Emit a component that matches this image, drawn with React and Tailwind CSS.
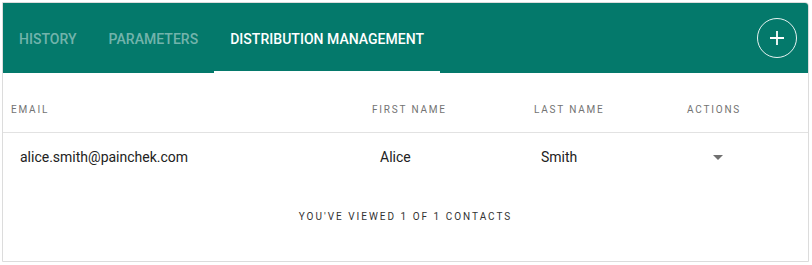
export default function App() {
  const tabs = ['History', 'Parameters', 'Distribution Management']
  const active = 2
  return (
    <div className="w-[812px] h-[265px] bg-white pt-[2px] pl-[2px] pr-[3px] font-['Roboto','Liberation_Sans',sans-serif]">
      <div className="h-[260px] border border-[#dcdcdc] rounded-tr-[4px] overflow-hidden flex flex-col">
        <div className="h-[70px] bg-[#04796b] flex items-stretch justify-between pr-[11px]">
          <div className="flex items-stretch">
            {tabs.map((t, i) => (
              <div key={t} className={`relative flex items-center px-4 pt-[2px] text-[14px] font-medium uppercase tracking-[0.03px] ${i === active ? 'text-white' : 'text-white/45'}`}>
                {t}
                {i === active && <div className="absolute left-0 right-0 bottom-0 h-[2px] bg-white" />}
              </div>
            ))}
          </div>
          <div className="flex items-center pb-[1px]">
            <div className="w-[40px] h-[40px] rounded-full border border-white/90 flex items-center justify-center">
              <svg width="16" height="16" viewBox="0 0 16 16" fill="none" stroke="white" strokeWidth="1.8">
                <path d="M8 1v14M1 8h14" />
              </svg>
            </div>
          </div>
        </div>
        <div className="grid grid-cols-[361px_162px_153px_1fr] h-[60px] items-center border-b border-[#e2e2e2] text-[10px] tracking-[1.8px] text-[#737373] pt-[14px]">
          <div className="pl-[8px]">EMAIL</div>
          <div className="pl-[8px]">FIRST NAME</div>
          <div className="pl-[8px]">LAST NAME</div>
          <div className="pl-[8px]">ACTIONS</div>
        </div>
        <div className="grid grid-cols-[361px_162px_153px_1fr] h-[48px] items-center text-[14px] text-[#222] pt-[1px]">
          <div className="pl-[17px]">alice.smith@painchek.com</div>
          <div className="pl-[16px]">Alice</div>
          <div className="pl-[15px]">Smith</div>
          <div className="pl-[34px] flex items-center">
            <svg width="10" height="5" viewBox="0 0 10 5">
              <path d="M0 0h10L5 5z" fill="#707070" />
            </svg>
          </div>
        </div>
        <div className="flex justify-center pt-[28px] text-[10px] tracking-[2px] text-[#333]">
          YOU'VE VIEWED 1 OF 1 CONTACTS
        </div>
      </div>
    </div>
  )
}
